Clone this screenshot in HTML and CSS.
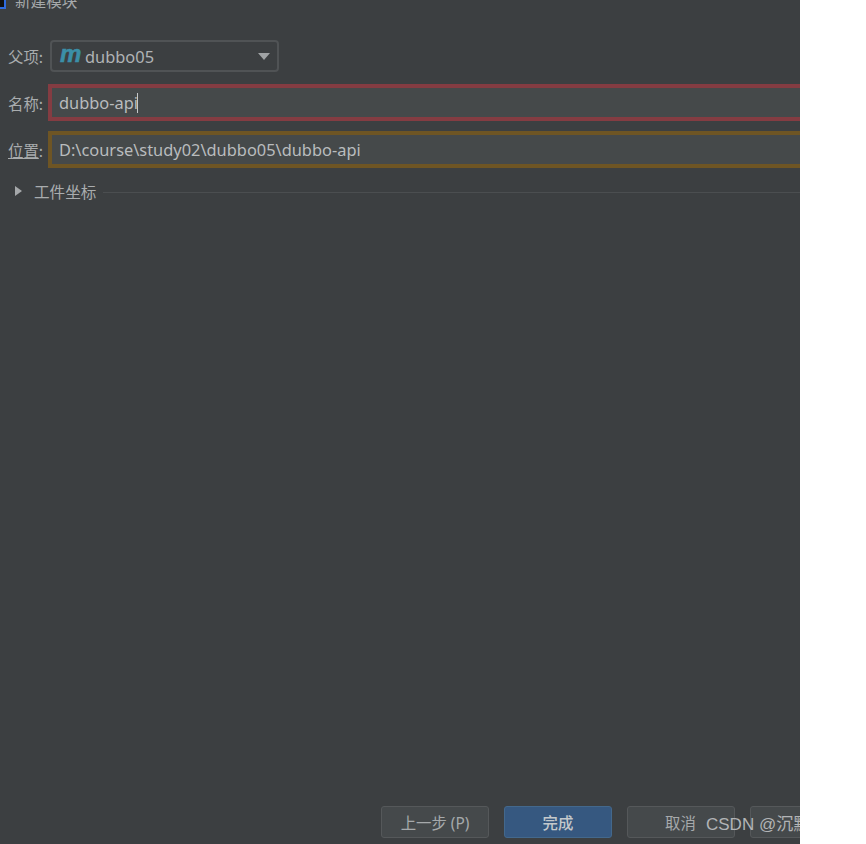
FILE: index.html
```html
<!DOCTYPE html>
<html lang="zh">
<head>
<meta charset="utf-8">
<title>新建模块</title>
<link rel="stylesheet" href="styles.css">
</head>
<body>
<div class="dialog">
  <div class="titlebar">
    <span class="app-icon"></span>
    <span class="title">新建模块</span>
  </div>
  <div class="form">
    <div class="row row-parent">
      <span class="label">父项:</span>
      <div class="select">
        <span class="maven">m</span>
        <span class="select-text">dubbo05</span>
        <svg class="caret" width="12" height="7" viewBox="0 0 12 7"><path d="M0 0H12L6 7Z" fill="#a0a3a5"/></svg>
      </div>
    </div>
    <div class="row row-name">
      <span class="label">名称:</span>
      <div class="input input-error"><span>dubbo-api</span><span class="cursor"></span></div>
    </div>
    <div class="row row-path">
      <span class="label"><u>位置</u>:</span>
      <div class="input input-warn"><span>D:\course\study02\dubbo05\dubbo-api</span></div>
    </div>
    <div class="section">
      <svg class="arrow" width="7" height="10" viewBox="0 0 7 10"><path d="M0 0L7 5L0 10Z" fill="#a5a8aa"/></svg>
      <span class="section-title">工件坐标</span>
      <span class="rule"></span>
    </div>
  </div>
  <div class="buttons">
    <button class="btn">上一步 (P)</button>
    <button class="btn btn-primary">完成</button>
    <button class="btn btn-cancel">取消</button>
    <button class="btn btn-last"></button>
  </div>
  <div class="watermark">CSDN @沉默</div>
</div>
</body>
</html>
```

FILE: styles.css
```css
* { box-sizing: border-box; }
html, body { margin: 0; padding: 0; background: #fff; }
body { width: 866px; height: 844px; overflow: hidden; font-family: "Noto Sans", "Noto Sans CJK SC", sans-serif; }
.dialog {
  position: relative;
  width: 800px;
  height: 844px;
  background: #3c3f41;
  color: #b4b7b9;
  font-size: 16.4px;
  display: flex;
  flex-direction: column;
  overflow: hidden;
}
.titlebar { height: 40px; margin-top: -9px; display: flex; align-items: flex-start; gap: 9px; flex: none; }
.title { font-family: "Noto Sans CJK SC", sans-serif; font-size: 15.6px; line-height: 20px; color: #a6a9ab; margin-top: -1px; }
.app-icon { width: 6px; height: 18px; border: 2px solid #2f6be0; border-left: 0; background: #111; flex: none; }
.form { display: flex; flex-direction: column; padding-left: 8px; flex: 1; }
.row { display: flex; align-items: center; flex: none; }
.label { width: 40px; flex: none; font-family: "Noto Sans CJK SC", sans-serif; font-size: 15.4px; color: #a9acae; white-space: nowrap; }
.row-parent { height: 32px; margin-top: 9px; }
.row-name { height: 37px; margin-top: 12px; }
.row-path { height: 37px; margin-top: 10px; }
.select {
  width: 229px; height: 32px; margin-left: 2px;
  display: flex; align-items: center; padding-left: 8px;
  border: 2px solid #505355; border-radius: 4px; background: #3c3f41;
}
.maven { font-family: "Liberation Sans", sans-serif; font-weight: bold; font-style: italic; font-size: 24px; line-height: 24px; color: #3b8fa8; width: 19px; margin-top: -4px; -webkit-text-stroke: 0.6px #3b8fa8; }
.select-text { margin-left: 6px; color: #b0b3b5; }
.caret { margin-left: auto; margin-right: 7px; }
.input {
  flex: 1; height: 37px; display: flex; align-items: center; padding-left: 7px;
  background: #45494a; color: #b9bcbe; border-width: 4px 0 4px 4px; border-style: solid;
}
.input-error { border-color: #843c42; }
.input-warn { border-color: #6e5524; }
.cursor { width: 1px; height: 20px; background: #c5c8ca; margin-left: -1px; }
.section { height: 20px; margin-top: 13px; padding-left: 7px; display: flex; align-items: center; flex: none; }
.section-title { margin-left: 12px; font-family: "Noto Sans CJK SC", sans-serif; font-size: 15.6px; color: #a9acae; }
.rule { flex: 1; height: 1px; background: #4b4e50; margin: 3px 0 0 7px; }
.buttons { position: absolute; left: 381px; top: 806px; display: flex; gap: 15px; }
.btn {
  width: 108px; height: 32px; flex: none; padding: 0;
  border: 1px solid #55585a; border-radius: 3px; background: #45494b;
  color: #a6a9ab; font-family: "Noto Sans", "Noto Sans CJK SC", sans-serif; font-size: 15.4px;
}
.btn-primary { background: #365880; border-color: #43688c; color: #c4c8cb; font-weight: 500; font-family: "Noto Sans CJK SC", sans-serif; }
.btn-cancel { text-align: left; padding-left: 37px; }
.watermark { position: absolute; left: 706px; top: 812px; font-family: "Liberation Sans", "Noto Sans CJK SC", sans-serif; font-size: 17px; line-height: 26px; color: #b2b4b6; white-space: nowrap; }
```
